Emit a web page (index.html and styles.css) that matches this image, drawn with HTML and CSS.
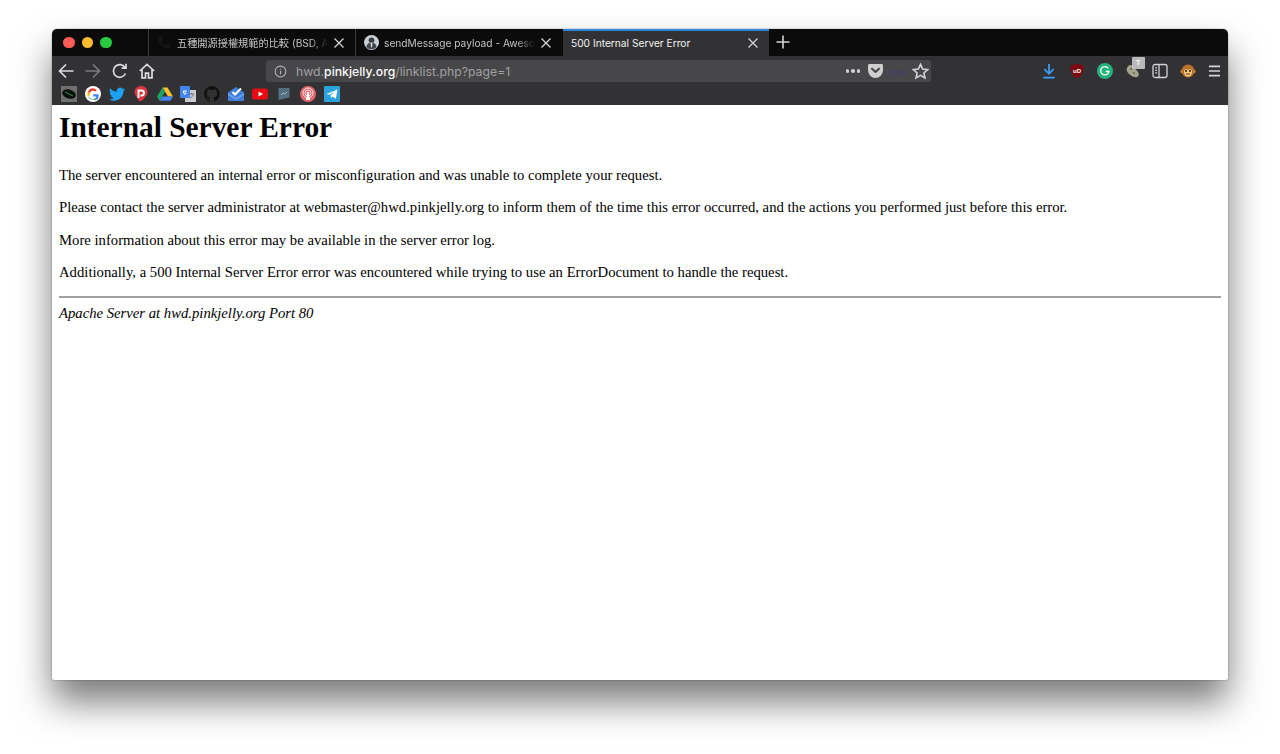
FILE: index.html
```html
<!DOCTYPE html>
<html lang="en">
<head>
<meta charset="utf-8">
<title>500 Internal Server Error</title>
<link rel="stylesheet" href="styles.css">
</head>
<body>
<div class="window">
  <div class="tabbar">
    <div class="traffic">
      <span class="light red"></span><span class="light yellow"></span><span class="light green"></span>
    </div>
    <div class="tab tab-first">
      <svg class="favicon" viewBox="0 0 16 16"><path d="M3 1l3 1 1 4-2 1c1 2 2 3 4 4l1-2 4 1 1 3-2 2C7 15 1 9 1 3z" fill="#151515"/></svg>
      <span class="tab-title cjk">五種開源授權規範的比較 (BSD, A</span>
      <svg class="tab-close" viewBox="0 0 12 12"><path d="M1.5 1.5l9 9M10.5 1.5l-9 9"/></svg>
    </div>
    <div class="tab tab-second">
      <svg class="favicon" viewBox="0 0 16 16"><circle cx="8" cy="8" r="8" fill="#c9d0d6"/><circle cx="8" cy="5.6" r="3" fill="#3a3a3c"/><path d="M2.5 13c.8-4 3-5 5.500-5s4.700 1 5.500 5a8 8 0 0 1-11 0z" fill="#44484e"/><path d="M7 8h2l-.5 5h-1z" fill="#e8e8e8"/></svg>
      <span class="tab-title">sendMessage payload - Aweso</span>
      <svg class="tab-close" viewBox="0 0 12 12"><path d="M1.500 1.500l9 9M10.500 1.500l-9 9"/></svg>
    </div>
    <div class="tab tab-active">
      <span class="tab-title">500 Internal Server Error</span>
      <svg class="tab-close" viewBox="0 0 12 12"><path d="M1.500 1.500l9 9M10.500 1.500l-9 9"/></svg>
    </div>
    <svg class="new-tab" viewBox="0 0 14 14"><path d="M7 .5v13M.5 7h13"/></svg>
  </div>

  <div class="toolbar">
    <div class="nav">
      <svg class="nav-icon" viewBox="0 0 18 18"><path d="M16.500 9H2.500M9 2.500L2.500 9 9 15.500"/></svg>
      <svg class="nav-icon dim" viewBox="0 0 18 18"><path d="M1.500 9h14M9 2.500L15.500 9 9 15.500"/></svg>
      <svg class="nav-icon" viewBox="0 0 18 18"><path d="M14.500 11.500A6.300 6.300 0 1 1 14 5.500M15 1.800v4.400h-4.400"/></svg>
      <svg class="nav-icon" viewBox="0 0 18 18"><path d="M1.800 9L9 2.300 16.200 9M4 7.500v8.300h3.500v-4.600h3v4.600H14V7.500"/></svg>
    </div>
    <div class="urlbar">
      <svg class="info" viewBox="0 0 14 14"><circle cx="7" cy="7" r="5.800"/><path d="M7 6.300v3.700M7 3.800v1.100"/></svg>
      <span class="url"><span class="url-dim">hwd.</span><span class="url-host">pinkjelly.org</span><span class="url-dim">/linklist.php?page=1</span></span>
      <div class="url-actions">
        <span class="dots"><i></i><i></i><i></i></span>
        <svg class="pocket" viewBox="0 0 16 15"><path d="M1.500 0h13A1.500 1.500 0 0 1 16 1.500V7A8 8 0 0 1 0 7V1.500A1.500 1.500 0 0 1 1.500 0z" fill="#cfcfd0"/><path d="M4.300 5L8 8.500 11.700 5" fill="none" stroke="#474749" stroke-width="2.200" stroke-linecap="round" stroke-linejoin="round"/></svg>
        <span class="php">php</span>
        <svg class="star" viewBox="0 0 16 16"><path d="M8 1.300l2 4.400 4.800.5-3.600 3.200 1 4.700L8 11.700l-4.200 2.400 1-4.700L1.200 6.200 6 5.700z"/></svg>
      </div>
    </div>
    <div class="extensions">
      <svg class="ext download" viewBox="0 0 16 18"><path d="M8 1v11M2.800 7L8 12.200 13.200 7M1.500 16.500h13"/></svg>
      <svg class="ext" viewBox="0 0 16 16"><path d="M8 .8l6.500 2c0 6-1.500 10.300-6.500 12.400C3 13.100 1.500 8.800 1.500 2.800z" fill="#800610"/><text x="8" y="10" class="ub">uD</text></svg>
      <svg class="ext" viewBox="0 0 16 16"><circle cx="8" cy="8" r="8" fill="#23b27a"/><path d="M11.300 5.300A4.200 4.200 0 1 0 12 8.500H8.800" fill="none" stroke="#fff" stroke-width="1.300"/></svg>
      <div class="ext-badged">
        <svg class="ext" viewBox="0 0 16 16"><path d="M2 5c1-3 4-4 6-2l5 6c2 3 0 6-3 5-3 0-4-2-6-3-2-2-3-4-2-6z" fill="#a5a48c"/><circle cx="6" cy="6" r="1" fill="#66664f"/><circle cx="9" cy="10" r="1" fill="#66664f"/></svg>
        <span class="badge">T</span>
      </div>
      <svg class="ext sidebar" viewBox="0 0 16 16"><rect x="1" y="1.500" width="14" height="13" rx="2"/><path d="M7 1.500v13M3.200 4.800h1.800M3.200 7.300h1.800M3.200 9.800h1.800"/></svg>
      <svg class="ext" viewBox="0 0 16 16"><circle cx="2.500" cy="8.500" r="2" fill="#e09a3c"/><circle cx="13.500" cy="8.500" r="2" fill="#e09a3c"/><circle cx="8" cy="8" r="6.500" fill="#b8702a"/><path d="M4 8.500c0-2 1.500-2.500 2.500-2 .8.400 1.500.4 3 0 1-.5 2.500 0 2.500 2 0 3-1.500 5-4 5s-4-2-4-5z" fill="#f3c983"/><circle cx="6" cy="8" r="1" fill="#222"/><circle cx="10" cy="8" r="1" fill="#222"/><path d="M6 11h4" stroke="#5a3310" stroke-width="1"/></svg>
      <svg class="ext menu" viewBox="0 0 14 14"><path d="M1 2h12M1 7h12M1 12h12"/></svg>
    </div>
  </div>

  <div class="bookmarks">
    <svg class="bm" viewBox="0 0 16 16"><rect width="16" height="16" fill="#6f7170"/><ellipse cx="8" cy="8" rx="7" ry="4.500" fill="#0b0f0c" transform="rotate(18 8 8)"/><path d="M4 6l8 4" stroke="#2f9a4a" stroke-width="1"/></svg>
    <svg class="bm" viewBox="0 0 16 16"><circle cx="8" cy="8" r="8" fill="#fff"/><path d="M13.700 8.200H8.200v2.200h3.100a3.400 3.400 0 0 1-1.300 1.900l2 1.500c1.200-1.100 1.900-2.900 1.700-5.600z" fill="#4285f4"/><path d="M8 13.500a5.500 5.500 0 0 1-5-3.100l-.1-.1 2 1.500A3.300 3.300 0 0 0 10 12.300l2 1.500A5.700 5.700 0 0 1 8 13.500z" fill="#34a853"/><path d="M2.900 5.500a5.600 5.600 0 0 0 0 5l2-1.500a3.400 3.400 0 0 1 0-2z" fill="#fbbc05"/><path d="M8 4.700c.9 0 1.600.3 2.200.9l1.700-1.700A5.600 5.600 0 0 0 2.900 5.500l2 1.500A3.300 3.300 0 0 1 8 4.700z" fill="#ea4335"/></svg>
    <svg class="bm" viewBox="0 0 16 16"><path d="M16 3.200c-.6.300-1.200.4-1.900.5.700-.4 1.200-1 1.400-1.800-.6.400-1.300.7-2.100.8a3.300 3.300 0 0 0-5.600 3C5.100 5.600 2.700 4.300 1.100 2.300c-.9 1.500-.4 3.400 1 4.400-.5 0-1-.2-1.500-.4 0 1.600 1.100 3 2.600 3.300-.5.100-1 .1-1.500 0 .4 1.300 1.600 2.200 3.100 2.300A6.600 6.600 0 0 1 0 13.200 9.300 9.300 0 0 0 14.400 5c.6-.5 1.200-1.100 1.600-1.800z" fill="#1da1f2"/></svg>
    <svg class="bm" viewBox="0 0 16 16"><path d="M3 2a7 7 0 0 1 10 0c2 2 2 6 0 8l-4 5H6l-3-5c-2-2-2-6 0-8z" fill="#d9363e"/><path d="M5.500 12V4.500h3a2.500 2.500 0 0 1 0 5h-1" fill="none" stroke="#fff" stroke-width="1.900"/></svg>
    <svg class="bm" viewBox="0 0 16 16"><path d="M5.500 1.500h5L16 10.500h-5z" fill="#fbc02d"/><path d="M5.500 1.500L0 10.500l2.500 4.200L8 5.700z" fill="#1fa463"/><path d="M2.500 14.700h11l2.500-4.200H5.300z" fill="#4285f4"/></svg>
    <svg class="bm" viewBox="0 0 16 16"><rect x="5" y="4" width="11" height="12" fill="#c9ccd1"/><rect width="10" height="12" rx="1" fill="#4285f4"/><path d="M7 5H3.500v2H6c-.2 1-1 1.500-2 1.200" fill="none" stroke="#fff" stroke-width="1"/><path d="M9 8h5M11.500 7v1M10 12c2-1 3-2 3.500-4" stroke="#6e7278" fill="none"/></svg>
    <svg class="bm" viewBox="0 0 16 16"><path d="M8 0a8 8 0 0 0-2.500 15.600c.4.100.5-.2.500-.4v-1.400c-2.200.5-2.700-1-2.700-1-.4-.9-.9-1.200-.9-1.200-.7-.5.100-.5.100-.5.800.1 1.200.8 1.200.8.700 1.200 1.900.9 2.300.7.100-.5.300-.9.500-1.100-1.800-.2-3.600-.9-3.600-4 0-.9.300-1.600.8-2.100-.1-.2-.4-1 .1-2.100 0 0 .7-.2 2.200.8a7.600 7.600 0 0 1 4 0c1.500-1 2.200-.8 2.200-.8.400 1.100.2 1.900.1 2.100.5.600.8 1.300.8 2.100 0 3.100-1.900 3.700-3.700 3.900.3.300.6.700.6 1.500v2.200c0 .2.100.5.600.4A8 8 0 0 0 8 0z" fill="#111"/></svg>
    <svg class="bm" viewBox="0 0 16 16"><path d="M0 6.500L8 1l8 5.500V14a1 1 0 0 1-1 1H1a1 1 0 0 1-1-1z" fill="#3f7fdc"/><path d="M4.500 6L7 8.500 13 2.500" fill="none" stroke="#fff" stroke-width="2"/><path d="M0 7l8 5 8-5v2l-8 5-8-5z" fill="#6da2ea"/></svg>
    <svg class="bm" viewBox="0 0 16 16"><rect y="2.500" width="16" height="11" rx="2.500" fill="#e60c12"/><path d="M6.500 5.500L11 8l-4.500 2.500z" fill="#fff"/></svg>
    <svg class="bm" viewBox="0 0 16 16"><path d="M2.500 2h11v9.500l-11 2.500z" fill="#546e82"/><path d="M5 9l2-2 1.500 1L11 6" fill="none" stroke="#a9bccb" stroke-width="1"/></svg>
    <svg class="bm" viewBox="0 0 16 16"><circle cx="8" cy="8" r="8" fill="#e2646b"/><circle cx="8" cy="7" r="5" fill="none" stroke="#fff" stroke-width=".8"/><circle cx="8" cy="7" r="3" fill="none" stroke="#fff" stroke-width=".8"/><circle cx="8" cy="7" r="1.300" fill="#fff"/><path d="M7 8h2l1 6H6z" fill="#fff"/></svg>
    <svg class="bm" viewBox="0 0 16 16"><rect width="16" height="16" rx="1" fill="#2ba2dc"/><path d="M2.500 8L13.500 3.500 11.800 12.800 8.500 10.500 7 12 6.500 9.500 11 5.500 5.500 8.800z" fill="#fff"/></svg>
  </div>

  <main class="page">
    <h1>Internal Server Error</h1>
    <p>The server encountered an internal error or misconfiguration and was unable to complete your request.</p>
    <p>Please contact the server administrator at webmaster@hwd.pinkjelly.org to inform them of the time this error occurred, and the actions you performed just before this error.</p>
    <p>More information about this error may be available in the server error log.</p>
    <p>Additionally, a 500 Internal Server Error error was encountered while trying to use an ErrorDocument to handle the request.</p>
    <hr>
    <address>Apache Server at hwd.pinkjelly.org Port 80</address>
  </main>
</div>
</body>
</html>
```
FILE: styles.css
```css
* { box-sizing: border-box; }
html, body { margin: 0; height: 100%; background: #fff; overflow: hidden; }
body { padding: 29px 52px 74px; }

.window {
  height: 651px;
  display: flex;
  flex-direction: column;
  background: #fff;
  border-radius: 5px 5px 2px 2px;
  box-shadow: 0 22px 36px rgba(0, 0, 0, .52), 0 0 2px rgba(0, 0, 0, .35);
}

/* Tab strip */
.tabbar {
  height: 27px;
  flex: none;
  display: flex;
  background: #0b0b0c;
  border-radius: 5px 5px 0 0;
  font: 10.200px "Inter", "Liberation Sans", "Noto Sans CJK TC", sans-serif;
  color: #c4c4c6;
}
.traffic { width: 96px; display: flex; align-items: center; gap: 7px; padding-left: 11px; flex: none; }
.light { width: 11.500px; height: 11.500px; border-radius: 50%; }
.red { background: #fc5b57; }
.yellow { background: #fdbc2d; }
.green { background: #28c83f; }

.tab {
  width: 207px;
  flex: none;
  display: flex;
  align-items: center;
  gap: 5px;
  padding: 0 10px 0 8px;
  border-left: 1px solid #3a3a3c;
}
.tab-active {
  background: #323234;
  color: #f2f2f3;
  border-left: 0;
  border-top: 2px solid #2f86d6;
  padding: 0 10px 2px 8px;
  margin-left: 1px;
  width: 206px;
}
.favicon { width: 15px; height: 15px; flex: none; }
.tab-title {
  flex: 1;
  min-width: 0;
  white-space: nowrap;
  -webkit-mask-image: linear-gradient(to right, #000 88%, transparent);
  mask-image: linear-gradient(to right, #000 88%, transparent);
}
.tab-active .tab-title { -webkit-mask-image: none; mask-image: none; }
.tab-close { width: 12px; height: 12px; flex: none; fill: none; stroke: #d4d4d6; stroke-width: 1.300; }
.new-tab { width: 14px; height: 14px; margin: 6px 0 0 7px; fill: none; stroke: #d4d4d6; stroke-width: 1.600; }

/* Address toolbar */
.toolbar {
  height: 26px;
  flex: none;
  display: flex;
  align-items: center;
  padding: 0 7px 0 5px;
  background: #323234;
}
.nav { width: 209px; display: flex; align-items: center; gap: 9px; flex: none; padding-top: 3px; }
.nav-icon { width: 18px; height: 18px; fill: none; stroke: #dcdcde; stroke-width: 1.700; flex: none; }
.nav-icon.dim { stroke: #7b7b7e; }

.urlbar {
  width: 665px;
  height: 22px;
  margin-top: 4px;
  flex: none;
  display: flex;
  align-items: center;
  padding: 0 2px 0 8px;
  background: #474749;
  border-radius: 3px;
  font: 12.250px "Inter", "Liberation Sans", sans-serif;
}
.info { width: 13px; height: 13px; fill: none; stroke: #b5b5b7; stroke-width: 1.100; flex: none; }
.url { margin-left: 9px; flex: 1; white-space: nowrap; }
.url-dim { color: #a0a0a2; }
.url-host { color: #fbfbfb; font-weight: 500; }
.url-actions { display: flex; align-items: center; flex: none; }
.dots { display: flex; gap: 2px; margin-right: 7px; }
.dots i { width: 3.500px; height: 3.500px; border-radius: 50%; background: #cfcfd0; }
.pocket { width: 15px; height: 14px; margin-left: 1px; }
.php { width: 24px; text-align: center; font-size: 9px; color: #3d3f6b; margin: 0 1px 0 3px; }
.star { width: 17px; height: 17px; fill: none; stroke: #d4d4d6; stroke-width: 1.500; margin-left: 1px; }

.extensions {
  margin-left: auto;
  display: flex;
  align-items: center;
  gap: 11.800px;
  padding-top: 3px;
}
.ext { width: 16px; height: 16px; flex: none; display: block; }
.download { fill: none; stroke: #3d9cf5; stroke-width: 2; }
.ub { font: bold 6px "Liberation Sans", sans-serif; fill: #fff; text-anchor: middle; }
.ext-badged { position: relative; }
.badge {
  position: absolute;
  left: 7px;
  top: -6px;
  width: 13px;
  height: 12px;
  background: #b9b9bb;
  color: #f4f4f4;
  border-radius: 1px;
  font: bold 8px/12px "Liberation Sans", sans-serif;
  text-align: center;
}
.sidebar { fill: none; stroke: #d4d4d6; stroke-width: 1.300; }
.menu { width: 13px; fill: none; stroke: #d4d4d6; stroke-width: 1.700; }

/* Bookmarks */
.bookmarks {
  height: 23px;
  flex: none;
  display: flex;
  align-items: center;
  gap: 7.900px;
  padding: 0 0 0 9px;
  background: #323234;
}
.bm { width: 16px; height: 16px; flex: none; }

/* Page content */
.page {
  flex: 1;
  padding: 0 7px;
  color: #000;
  font: 14.700px/18px "Liberation Serif", serif;
}
h1 { margin: 5px 0 22px; font-size: 29.400px; line-height: 34px; font-weight: bold; }
p { margin: 0 0 14.400px; }
hr { margin: 8px 0 0; height: 2px; border: 0; background: #a0a0a0; }
address { margin-top: 6.500px; font-style: italic; }
```
